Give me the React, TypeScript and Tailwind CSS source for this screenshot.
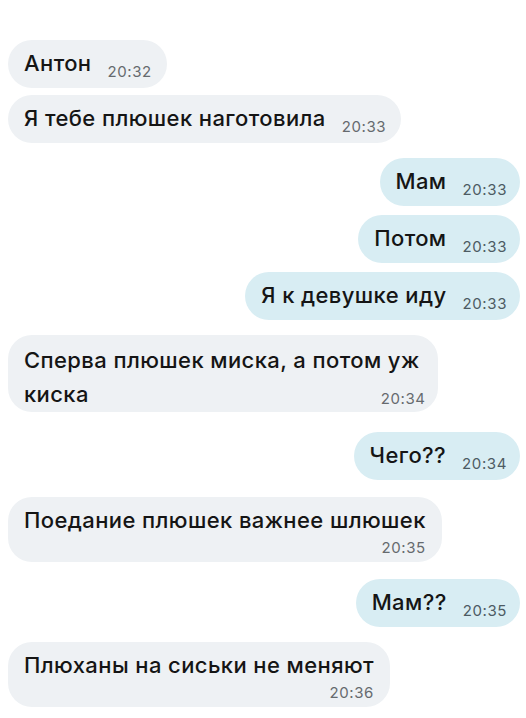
const font = { fontFamily: 'Inter, "Liberation Sans", Arial, sans-serif' };

type Msg = {
  lines: string[];
  time: string;
  out?: boolean;
  kind: "inline" | "wrap" | "below";
  gap: string;
};

const messages: Msg[] = [
  { lines: ["Антон"], time: "20:32", kind: "inline", gap: "mt-[40px]" },
  { lines: ["Я тебе плюшек наготовила"], time: "20:33", kind: "inline", gap: "mt-[7px]" },
  { lines: ["Мам"], time: "20:33", out: true, kind: "inline", gap: "mt-[15px]" },
  { lines: ["Потом"], time: "20:33", out: true, kind: "inline", gap: "mt-[9px]" },
  { lines: ["Я к девушке иду"], time: "20:33", out: true, kind: "inline", gap: "mt-[9px]" },
  {
    lines: ["Сперва плюшек миска, а потом уж", "киска"],
    time: "20:34",
    kind: "wrap",
    gap: "mt-[15px]",
  },
  { lines: ["Чего??"], time: "20:34", out: true, kind: "inline", gap: "mt-[20px]" },
  { lines: ["Поедание плюшек важнее шлюшек"], time: "20:35", kind: "below", gap: "mt-[17px]" },
  { lines: ["Мам??"], time: "20:35", out: true, kind: "inline", gap: "mt-[17px]" },
  { lines: ["Плюханы на сиськи не меняют"], time: "20:36", kind: "below", gap: "mt-[15px]" },
];

const Time = ({ value, out, className }: { value: string; out?: boolean; className: string }) => (
  <span
    className={`text-[15px] leading-[15px] tracking-[0.6px] ${out ? "text-[#4d5b63]" : "text-[#666a6e]"} ${className}`}
  >
    {value}
  </span>
);

const Bubble = ({ msg }: { msg: Msg }) => {
  const bg = msg.out ? "bg-[#d8edf3]" : "bg-[#eef1f4]";

  if (msg.kind === "inline") {
    return (
      <div
        className={`flex h-[48px] rounded-[24px] pl-4 ${msg.out ? "pr-[13px]" : "pr-[15px]"} ${bg}`}
      >
        <span className="text-[22px] font-medium leading-[46px] tracking-[0.4px]">{msg.lines[0]}</span>
        <Time value={msg.time} out={msg.out} className="ml-4 mb-[9px] self-end" />
      </div>
    );
  }

  if (msg.kind === "wrap") {
    return (
      <div className={`rounded-[24px] pl-4 pr-3 pt-2 pb-px ${bg}`}>
        <p className="pr-[6px] text-[22px] font-medium leading-[34px] tracking-[0.4px]">{msg.lines[0]}</p>
        <div className="flex items-end justify-between">
          <span className="text-[22px] font-medium leading-[34px] tracking-[0.4px]">{msg.lines[1]}</span>
          <Time value={msg.time} out={msg.out} className="mb-[5px]" />
        </div>
      </div>
    );
  }

  // text on its own line, time on the next one
  return (
    <div className={`flex flex-col items-end rounded-[24px] pl-4 pr-4 pt-[6px] pb-[5px] ${bg}`}>
      <p className="self-start text-[22px] font-medium leading-[34px] tracking-[0.4px]">{msg.lines[0]}</p>
      <div className="flex h-[20px] items-center">
        <Time value={msg.time} out={msg.out} className="" />
      </div>
    </div>
  );
};

export default function App() {
  return (
    <div className="h-[718px] w-[526px] overflow-hidden bg-white text-[#151515]" style={font}>
      <div className="flex flex-col pl-2 pr-[6px]">
        {messages.map((msg, i) => (
          <div
            key={i}
            className={`flex ${msg.out ? "justify-end" : "justify-start"} ${msg.gap}`}
          >
            <Bubble msg={msg} />
          </div>
        ))}
      </div>
    </div>
  );
}
